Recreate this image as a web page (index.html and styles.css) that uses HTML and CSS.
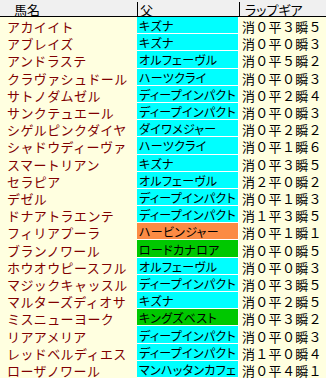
FILE: index.html
```html
<!DOCTYPE html>
<html lang="ja">
<head>
<meta charset="utf-8">
<link rel="stylesheet" href="styles.css">
</head>
<body>
<div class="table">
  <div class="hd hd-name"><span>馬名</span></div>
  <div class="hd hd-sire sep"><span>父</span></div>
  <div class="hd hd-lap sep"><span>ラップギア</span></div>

  <div class="name">アカイイト</div><div class="sire c">キズナ</div><div class="lap">消０平３瞬５</div>
  <div class="name">アブレイズ</div><div class="sire c">キズナ</div><div class="lap">消０平０瞬３</div>
  <div class="name">アンドラステ</div><div class="sire c">オルフェーヴル</div><div class="lap">消０平５瞬２</div>
  <div class="name">クラヴァシュドール</div><div class="sire c">ハーツクライ</div><div class="lap">消０平０瞬３</div>
  <div class="name">サトノダムゼル</div><div class="sire c">ディープインパクト</div><div class="lap">消０平２瞬４</div>
  <div class="name">サンクテュエール</div><div class="sire c">ディープインパクト</div><div class="lap">消０平０瞬３</div>
  <div class="name">シゲルピンクダイヤ</div><div class="sire c">ダイワメジャー</div><div class="lap">消０平２瞬２</div>
  <div class="name">シャドウディーヴァ</div><div class="sire c">ハーツクライ</div><div class="lap">消０平１瞬６</div>
  <div class="name">スマートリアン</div><div class="sire c">キズナ</div><div class="lap">消０平３瞬５</div>
  <div class="name">セラピア</div><div class="sire c">オルフェーヴル</div><div class="lap">消２平０瞬２</div>
  <div class="name">デゼル</div><div class="sire c">ディープインパクト</div><div class="lap">消０平１瞬３</div>
  <div class="name">ドナアトラエンテ</div><div class="sire c">ディープインパクト</div><div class="lap">消１平３瞬５</div>
  <div class="name">フィリアプーラ</div><div class="sire o">ハービンジャー</div><div class="lap">消０平１瞬１</div>
  <div class="name">ブランノワール</div><div class="sire g">ロードカナロア</div><div class="lap">消０平０瞬５</div>
  <div class="name">ホウオウピースフル</div><div class="sire c">オルフェーヴル</div><div class="lap">消０平０瞬３</div>
  <div class="name">マジックキャッスル</div><div class="sire c">ディープインパクト</div><div class="lap">消０平３瞬５</div>
  <div class="name">マルターズディオサ</div><div class="sire c">キズナ</div><div class="lap">消０平２瞬５</div>
  <div class="name">ミスニューヨーク</div><div class="sire g">キングズベスト</div><div class="lap">消０平３瞬２</div>
  <div class="name">リアアメリア</div><div class="sire c">ディープインパクト</div><div class="lap">消０平０瞬３</div>
  <div class="name">レッドベルディエス</div><div class="sire c">ディープインパクト</div><div class="lap">消１平０瞬４</div>
  <div class="name">ローザノワール</div><div class="sire c">マンハッタンカフェ</div><div class="lap">消０平４瞬１</div>
</div>
</body>
</html>
```
FILE: styles.css
```css
html, body {
  margin: 0;
  padding: 0;
  background: #ffffe0;
}
body {
  font-family: "Noto Sans CJK JP", "Noto Sans", sans-serif;
}
.table {
  width: 326px;
  height: 378px;
  display: grid;
  grid-template-columns: 137px 102px 1fr;
  grid-template-rows: 17px repeat(21, 1fr);
  background: #ffffe0;
  overflow: hidden;
}
.hd {
  background-color: #f0f0f0;
  border-bottom: 1px solid #000;
  display: flex;
  align-items: center;
  font-size: 13px;
  color: #000;
  line-height: 1;
  padding-top: 2px;
  box-sizing: border-box;
}
.hd.sep {
  background-image: linear-gradient(#000, #000);
  background-repeat: no-repeat;
  background-size: 1px 14px;
  background-position: left bottom;
}
.hd-name {
  padding-left: 14px;
}
.hd-sire {
  padding-left: 3px;
}
.hd-lap {
  padding-left: 6px;
  font-feature-settings: "palt";
}
.name, .sire, .lap {
  display: flex;
  align-items: center;
  white-space: nowrap;
  line-height: 1;
  padding-top: 2px;
  box-sizing: border-box;
}
.name {
  color: #800000;
  font-size: 13px;
  letter-spacing: 0.4px;
  padding-left: 7px;
}
.sire {
  color: #000;
  font-size: 12px;
  letter-spacing: 0.3px;
  font-feature-settings: "palt";
  padding-left: 2px;
  border-bottom: 1px solid #fff;
  border-right: 1px solid #fff;
}
.sire.c { background: #00ffff; }
.sire.o { background: #fb8b44; }
.sire.g { background: #00c800; }
.lap {
  color: #000;
  font-size: 13px;
  letter-spacing: 0.3px;
  padding-left: 3px;
}
```
